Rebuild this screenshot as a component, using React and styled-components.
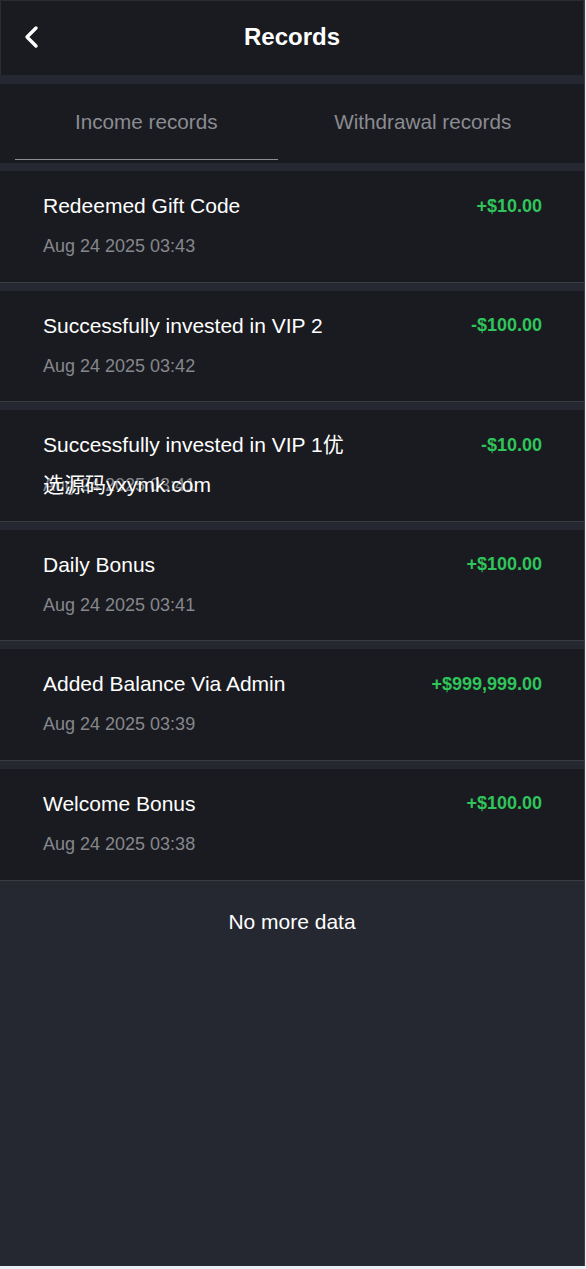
import React from "react";
import styled, { createGlobalStyle } from "styled-components";

const records = [
  { title: "Redeemed Gift Code", date: "Aug 24 2025 03:43", amount: "+$10.00" },
  { title: "Successfully invested in VIP 2", date: "Aug 24 2025 03:42", amount: "-$100.00" },
  { title: "Successfully invested in VIP 1优", date: "Aug 24 2025 03:41", amount: "-$10.00", mark: "选源码yxymk.com" },
  { title: "Daily Bonus", date: "Aug 24 2025 03:41", amount: "+$100.00" },
  { title: "Added Balance Via Admin", date: "Aug 24 2025 03:39", amount: "+$999,999.00" },
  { title: "Welcome Bonus", date: "Aug 24 2025 03:38", amount: "+$100.00" },
];

export default function App() {
  return (
    <>
      <GlobalStyle />
      <Page>
        <Header>
          <BackBtn>
            <svg width="18" height="24" viewBox="0 0 18 24">
              <path d="M13 3 L4 12 L13 21" fill="none" stroke="#fff" strokeWidth="3.4" strokeLinecap="round" strokeLinejoin="round" />
            </svg>
          </BackBtn>
          <Title>Records</Title>
        </Header>
        <Tabs>
          <Tab active>Income records</Tab>
          <Tab>Withdrawal records</Tab>
        </Tabs>
        <List>
          {records.map((r, key) => (
            <Item key={key}>
              <Row>
                <ItemTitle>{r.title}</ItemTitle>
                <Amount>{r.amount}</Amount>
              </Row>
              <DateLine>
                {r.date}
                {r.mark && <Mark>{r.mark}</Mark>}
              </DateLine>
            </Item>
          ))}
        </List>
        <NoMore>No more data</NoMore>
      </Page>
    </>
  );
}

const GlobalStyle = createGlobalStyle`
  body {
    margin: 0;
    background: #e9eef4;
    font-family: "Liberation Sans", Arial, "Noto Sans CJK SC", sans-serif;
  }
`;

const Page = styled.div`
  width: 585px;
  min-height: 1266px;
  background: #252830;
  display: flex;
  flex-direction: column;
  border-right: 1px solid #3a3d45;
  box-sizing: border-box;
`;

const Header = styled.div`
  height: 75px;
  background: #1a1b20;
  border: 1px solid #2a2c32;
  border-bottom: none;
  box-sizing: border-box;
  display: flex;
  align-items: center;
  justify-content: center;
  position: relative;
  margin-bottom: 9px;
  padding-bottom: 3px;
`;

const BackBtn = styled.div`
  position: absolute;
  left: 22px;
  top: 24px;
  display: flex;
`;

const Title = styled.div`
  color: #fff;
  font-size: 24px;
  font-weight: bold;
`;

const Tabs = styled.div`
  height: 79px;
  background: #1a1b20;
  display: flex;
  padding: 0 30px 0 15px;
  gap: 14px;
  margin-bottom: 8px;
`;

const Tab = styled.div`
  flex: 1;
  display: flex;
  align-items: center;
  justify-content: center;
  color: #8a8c92;
  font-size: 20.7px;
  border-bottom: 1px solid ${(p) => (p.active ? "#8e8e92" : "transparent")};
  margin-bottom: 3px;
`;

const List = styled.div`
  display: flex;
  flex-direction: column;
  gap: 8px;
`;

const Item = styled.div`
  height: 111.6px;
  box-sizing: border-box;
  background: #1a1b20;
  border-bottom: 1px solid #3a3c42;
  padding: 24px 43px 0 43px;
`;

const Row = styled.div`
  display: flex;
  justify-content: space-between;
  align-items: center;
`;

const ItemTitle = styled.div`
  color: #fff;
  font-size: 21px;
  line-height: 22px;
`;

const Amount = styled.div`
  color: #2fc55a;
  font-size: 18px;
  font-weight: bold;
  line-height: 22px;
  margin-top: -1px;
  margin-right: -1px;
`;

const DateLine = styled.div`
  position: relative;
  margin-top: 18px;
  color: #85878c;
  font-size: 18px;
  line-height: 22px;
`;

const Mark = styled.span`
  position: absolute;
  left: 0;
  top: 0;
  color: #fff;
  font-size: 21px;
  line-height: 22px;
  white-space: nowrap;
`;

const NoMore = styled.div`
  text-align: center;
  color: #fff;
  font-size: 21px;
  padding-top: 29px;
`;
